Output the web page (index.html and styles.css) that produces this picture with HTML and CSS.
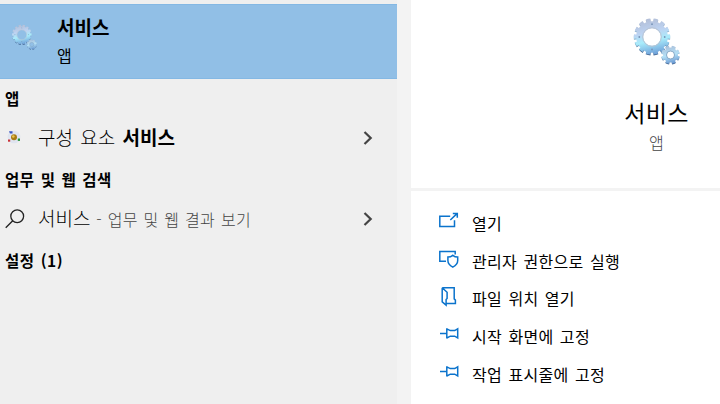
FILE: index.html
```html
<!DOCTYPE html>
<html lang="ko">
<head>
  <meta charset="UTF-8" />
  <meta name="viewport" content="width=device-width, initial-scale=1.0"/>
  <title>서비스</title>
  <link rel="stylesheet" href="styles.css">
</head>
<body>

  <div class="results">
    <div class="best-match">
      <svg class="gear-small" viewBox="0 0 50 50">
        <use href="#gears"/>
      </svg>
      <div>
        <div class="best-title">서비스</div>
        <div class="best-type">앱</div>
      </div>
    </div>

    <div class="section">앱</div>
    <div class="result">
      <svg class="component-icon" viewBox="0 0 14 14">
        <circle cx="7" cy="7" r="6.3" fill="#dfe4f0"/>
        <circle cx="7" cy="7.2" r="3" fill="#a87a13"/>
        <circle cx="6.3" cy="6.5" r="1.3" fill="#e9c552"/>
        <path d="M2 1.2h3.5v2.4H3z" fill="#3a56c4"/>
        <rect x="1" y="9.5" width="2.2" height="2.2" fill="#c93239"/>
        <rect x="10.8" y="8.5" width="2.2" height="2.4" fill="#26943a"/>
      </svg>
      <div class="label">구성 요소 <b>서비스</b></div>
      <svg class="chevron" viewBox="0 0 10 14"><path d="M1.5 1L7.7 7L1.5 13"/></svg>
    </div>

    <div class="section">업무 및 웹 검색</div>
    <div class="result">
      <svg class="search-icon" viewBox="0 0 20 20">
        <circle cx="12.2" cy="7.2" r="6.4"/>
        <path d="M7.7 11.7L.7 18.8"/>
      </svg>
      <div class="label">서비스<span class="hint"> - 업무 및 웹 결과 보기</span></div>
      <svg class="chevron" viewBox="0 0 10 14"><path d="M1.5 1L7.7 7L1.5 13"/></svg>
    </div>

    <div class="section">설정 (1)</div>
  </div>

  <div class="details">
    <div class="app">
      <svg class="gear-large" viewBox="0 0 50 50">
        <defs>
          <linearGradient id="steel" gradientUnits="userSpaceOnUse" x1="16" y1="2" x2="24" y2="38">
            <stop offset="0" stop-color="#b3bfd8"/>
            <stop offset="0.35" stop-color="#bdd3f2"/>
            <stop offset="0.6" stop-color="#a9ecfb"/>
            <stop offset="1" stop-color="#6a9ad6"/>
          </linearGradient>
          <linearGradient id="steelSmall" gradientUnits="userSpaceOnUse" x1="36" y1="28" x2="41" y2="48">
            <stop offset="0" stop-color="#a9bdd8"/>
            <stop offset="0.5" stop-color="#b4e0f6"/>
            <stop offset="1" stop-color="#5b8bcb"/>
          </linearGradient>
          <linearGradient id="steelDark" x1="0" y1="0" x2="0" y2="1">
            <stop offset="0" stop-color="#a9b6cc"/>
            <stop offset="0.5" stop-color="#8db8d6"/>
            <stop offset="1" stop-color="#42658f"/>
          </linearGradient>
        </defs>
        <g id="gears">
          <!-- dashed ring = gear teeth -->
          <g fill="none">
            <circle cx="20" cy="20.3" r="16.4" stroke="url(#steelDark)" stroke-width="3.6" pathLength="140" stroke-dasharray="6 4" stroke-dashoffset="3"/>
            <circle cx="20" cy="19.5" r="16.2" stroke="url(#steel)" stroke-width="3.8" pathLength="140" stroke-dasharray="5.6 4.4" stroke-dashoffset="2.8"/>
            <circle cx="20" cy="20" r="12.3" stroke="url(#steel)" stroke-width="7"/>
            <circle cx="20" cy="20" r="9.3" stroke="#b9c3d2" stroke-width="1"/>
            <circle cx="38.5" cy="38.4" r="7.8" stroke="url(#steelDark)" stroke-width="3" pathLength="80" stroke-dasharray="5.8 4.2" stroke-dashoffset="-2"/>
            <circle cx="38.5" cy="37.8" r="7.6" stroke="url(#steelSmall)" stroke-width="3" pathLength="80" stroke-dasharray="5.8 4.2" stroke-dashoffset="-2"/>
            <circle cx="38.5" cy="38" r="5.6" stroke="url(#steelSmall)" stroke-width="3.8"/>
            <circle cx="38.5" cy="38" r="4" stroke="#7c9dbd" stroke-width="0.8"/>
          </g>
          <g fill="#7893b8">
            <circle cx="20" cy="7.2" r="0.9"/>
            <circle cx="32.7" cy="20" r="0.9"/>
            <circle cx="20" cy="32.5" r="0.9"/>
            <circle cx="7.3" cy="20" r="0.9"/>
          </g>
        </g>
      </svg>
      <div class="app-title">서비스</div>
      <div class="app-type">앱</div>
    </div>

    <div class="actions">
      <div class="action">
        <svg viewBox="0 0 22 22"><path d="M12.2 6.3H1.8v10.2h14.7v-6.3M12.3 10L19 3.6M14.8 3.4h4.5v4.3"/></svg>
        <span>열기</span>
      </div>
      <div class="action">
        <svg viewBox="0 0 22 22"><path d="M8 13.3H1.8V3.5h15.4v3M14.8 7.3c-1.5 1.2-3 1.7-4.9 1.7v3.5c0 3 1.8 5 4.9 6.6 3.1-1.6 4.9-3.6 4.9-6.6V9c-1.9 0-3.4-.5-4.9-1.7z"/></svg>
        <span>관리자 권한으로 실행</span>
      </div>
      <div class="action">
        <svg viewBox="0 0 22 22"><path d="M4.2 1.7h12v11.2l1.2 1.2v3.3H8.3M4.2 1.7v14.2l3.9 3.2v-5.6l1-1V6.3L4.2 1.7"/></svg>
        <span>파일 위치 열기</span>
      </div>
      <div class="action">
        <svg viewBox="0 0 22 22"><path d="M2 10.4h6.4M8.8 5.2v10.4M8.8 5.8l3.5 1.8h4.4l3-1.8v9.2l-3-1.8h-4.4l-3.5 1.8"/></svg>
        <span>시작 화면에 고정</span>
      </div>
      <div class="action">
        <svg viewBox="0 0 22 22"><path d="M2 10.4h6.4M8.8 5.2v10.4M8.8 5.8l3.5 1.8h4.4l3-1.8v9.2l-3-1.8h-4.4l-3.5 1.8"/></svg>
        <span>작업 표시줄에 고정</span>
      </div>
    </div>
  </div>

</body>
</html>
```

FILE: styles.css
```css
body {
  margin: 0;
  width: 720px;
  height: 404px;
  display: flex;
  gap: 14px;
  overflow: hidden;
  background: #f3f3f3;
  color: #000;
  font-family: 'Noto Sans CJK KR', sans-serif;
  font-size: 16px;
  letter-spacing: 0.3px;
  word-spacing: 1.6px;
  white-space: nowrap;
}

svg {
  display: block;
  flex: none;
}

.results {
  width: 397px;
  flex: none;
  box-sizing: border-box;
  padding-top: 4px;
  background: #efefef;
}

.best-match {
  height: 75px;
  box-sizing: border-box;
  display: flex;
  padding: 9px 0 0 11px;
  background: #91bfe6;
  box-shadow: inset 0 1px #84b8e4, inset 0 -1px #84b8e4;
}

.gear-small {
  width: 27px;
  height: 27px;
  margin: 11px 19px 0 0;
}

.best-title {
  font-size: 19px;
  font-weight: bold;
  line-height: 28px;
  letter-spacing: 0;
}

.best-type {
  line-height: 29px;
}

.section {
  height: 38px;
  line-height: 38px;
  padding-left: 5px;
  font-size: 15.5px;
  letter-spacing: 0.6px;
  word-spacing: 1px;
  font-weight: bold;
}

.result {
  height: 43px;
  box-sizing: border-box;
  display: flex;
  align-items: center;
  padding: 0 24px 2px 5px;
}

.component-icon {
  width: 14px;
  height: 14px;
  margin: 0 17px 2px 2px;
}

.search-icon {
  width: 20px;
  height: 20px;
  margin-right: 13px;
  fill: none;
  stroke: #222;
  stroke-width: 1.3;
}

.label {
  flex: 1;
  margin-top: -2px;
  font-size: 19px;
  letter-spacing: 0;
  word-spacing: 2px;
  font-weight: 300;
}

.label b {
  font-weight: 700;
}

.hint {
  font-size: 16px;
  letter-spacing: 0.3px;
  word-spacing: 1px;
  color: #444;
}

.chevron {
  width: 10px;
  height: 14px;
  fill: none;
  stroke: #444;
  stroke-width: 2.2;
}

.details {
  flex: 1;
  display: flex;
  flex-direction: column;
  gap: 3px;
}

.app {
  height: 188px;
  box-sizing: border-box;
  padding: 17px 0 0 182px;
  display: flex;
  flex-direction: column;
  align-items: center;
  background: #fff;
}

.gear-large {
  width: 50px;
  height: 50px;
}

.app-title {
  margin-top: 27px;
  font-size: 23px;
  line-height: 36px;
  letter-spacing: 0.3px;
}

.app-type {
  line-height: 24px;
  color: #444;
  font-weight: 300;
}

.actions {
  flex: 1;
  padding: 13px 0 0 27px;
  background: #fff;
}

.action {
  height: 37.7px;
  display: flex;
  align-items: center;
}

.action svg {
  width: 22px;
  height: 22px;
  margin: -3px 12px 0 0;
  fill: none;
  stroke: #0b73cc;
  stroke-width: 1.5;
}
```
